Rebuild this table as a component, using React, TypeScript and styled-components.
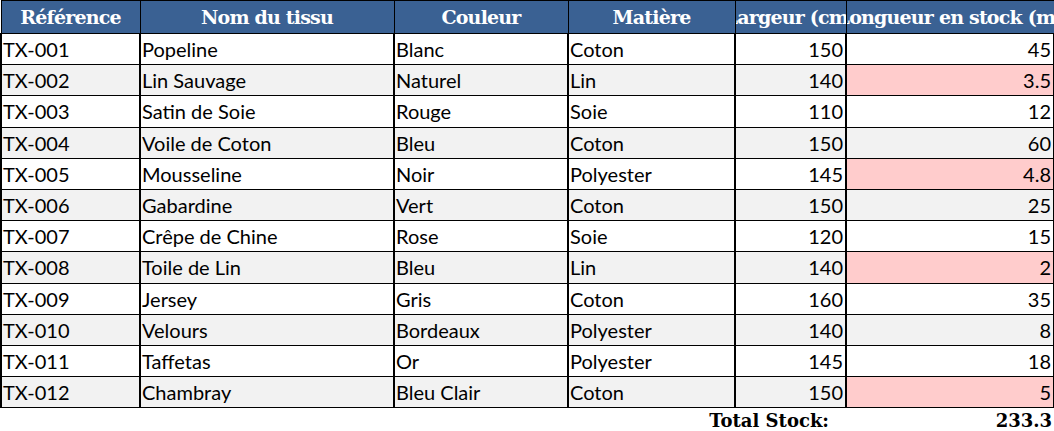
import * as React from "react";
import styled, { createGlobalStyle } from "styled-components";

interface Fabric {
  ref: string;
  name: string;
  color: string;
  material: string;
  width: number;
  stock: number;
}

const fabrics: Fabric[] = [
  { ref: "TX-001", name: "Popeline", color: "Blanc", material: "Coton", width: 150, stock: 45 },
  { ref: "TX-002", name: "Lin Sauvage", color: "Naturel", material: "Lin", width: 140, stock: 3.5 },
  { ref: "TX-003", name: "Satin de Soie", color: "Rouge", material: "Soie", width: 110, stock: 12 },
  { ref: "TX-004", name: "Voile de Coton", color: "Bleu", material: "Coton", width: 150, stock: 60 },
  { ref: "TX-005", name: "Mousseline", color: "Noir", material: "Polyester", width: 145, stock: 4.8 },
  { ref: "TX-006", name: "Gabardine", color: "Vert", material: "Coton", width: 150, stock: 25 },
  { ref: "TX-007", name: "Crêpe de Chine", color: "Rose", material: "Soie", width: 120, stock: 15 },
  { ref: "TX-008", name: "Toile de Lin", color: "Bleu", material: "Lin", width: 140, stock: 2 },
  { ref: "TX-009", name: "Jersey", color: "Gris", material: "Coton", width: 160, stock: 35 },
  { ref: "TX-010", name: "Velours", color: "Bordeaux", material: "Polyester", width: 140, stock: 8 },
  { ref: "TX-011", name: "Taffetas", color: "Or", material: "Polyester", width: 145, stock: 18 },
  { ref: "TX-012", name: "Chambray", color: "Bleu Clair", material: "Coton", width: 150, stock: 5 },
];

const columns = [
  { title: "Référence", width: 139 },
  { title: "Nom du tissu", width: 254 },
  { title: "Couleur", width: 174 },
  { title: "Matière", width: 167 },
  { title: "Largeur (cm)", width: 111 },
  { title: "Longueur en stock (m)", width: 208 },
];

const LOW_STOCK = 5;

const GlobalStyle = createGlobalStyle`
  html, body {
    margin: 0;
    padding: 0;
    background: #ffffff;
  }
`;

const Sheet = styled.table`
  border-collapse: collapse;
  table-layout: fixed;
  width: 1053px;
  font-family: Lato, "Open Sans", sans-serif;
  font-size: 20px;
  color: #000000;
`;

const HeadCell = styled.th`
  height: 32px;
  padding: 0;
  background: #3a6193;
  border: 1px solid #000000;
  overflow: hidden;
`;

// Centred with unsafe flex alignment so long titles are clipped on both sides
const HeadLabel = styled.div`
  display: flex;
  justify-content: center;
  white-space: nowrap;
  font-family: "DejaVu Serif", "Liberation Serif", serif;
  font-weight: 700;
  font-size: 19px;
  letter-spacing: -0.8px;
  color: #ffffff;
`;

const Row = styled.tr<{ $shaded: boolean }>`
  height: 31.2px;
  background: ${(p) => (p.$shaded ? "#f2f2f2" : "#ffffff")};
`;

const Cell = styled.td<{ $numeric?: boolean; $alert?: boolean }>`
  padding: 0 2px 0 1px;
  border: 1px solid #000000;
  border-left-width: 2px;
  border-right-width: 2px;
  text-align: ${(p) => (p.$numeric ? "right" : "left")};
  background: ${(p) => (p.$alert ? "#ffcccc" : "transparent")};
  white-space: nowrap;
  overflow: hidden;
`;

const TotalRow = styled.tr`
  height: 24px;
`;

const TotalCell = styled.td`
  padding: 0 2px 0 0;
  text-align: right;
  font-family: "DejaVu Serif", "Liberation Serif", serif;
  font-weight: 700;
  font-size: 18px;
  white-space: nowrap;
`;

const TotalLabel = styled(TotalCell)`
  padding-right: 17px;
`;

export default function App() {
  const total = fabrics.reduce((sum, f) => sum + f.stock, 0);

  return (
    <>
      <GlobalStyle />
      <Sheet>
        <colgroup>
          {columns.map((c) => (
            <col key={c.title} style={{ width: c.width }} />
          ))}
        </colgroup>
        <thead>
          <tr>
            {columns.map((c) => (
              <HeadCell key={c.title}>
                <HeadLabel>{c.title}</HeadLabel>
              </HeadCell>
            ))}
          </tr>
        </thead>
        <tbody>
          {fabrics.map((f, i) => (
            <Row key={f.ref} $shaded={i % 2 === 1}>
              <Cell>{f.ref}</Cell>
              <Cell>{f.name}</Cell>
              <Cell>{f.color}</Cell>
              <Cell>{f.material}</Cell>
              <Cell $numeric>{f.width}</Cell>
              <Cell $numeric $alert={f.stock <= LOW_STOCK}>
                {f.stock}
              </Cell>
            </Row>
          ))}
          <TotalRow>
            <td colSpan={3} />
            <TotalLabel colSpan={2}>Total Stock:</TotalLabel>
            <TotalCell>{Math.round(total * 10) / 10}</TotalCell>
          </TotalRow>
        </tbody>
      </Sheet>
    </>
  );
}
